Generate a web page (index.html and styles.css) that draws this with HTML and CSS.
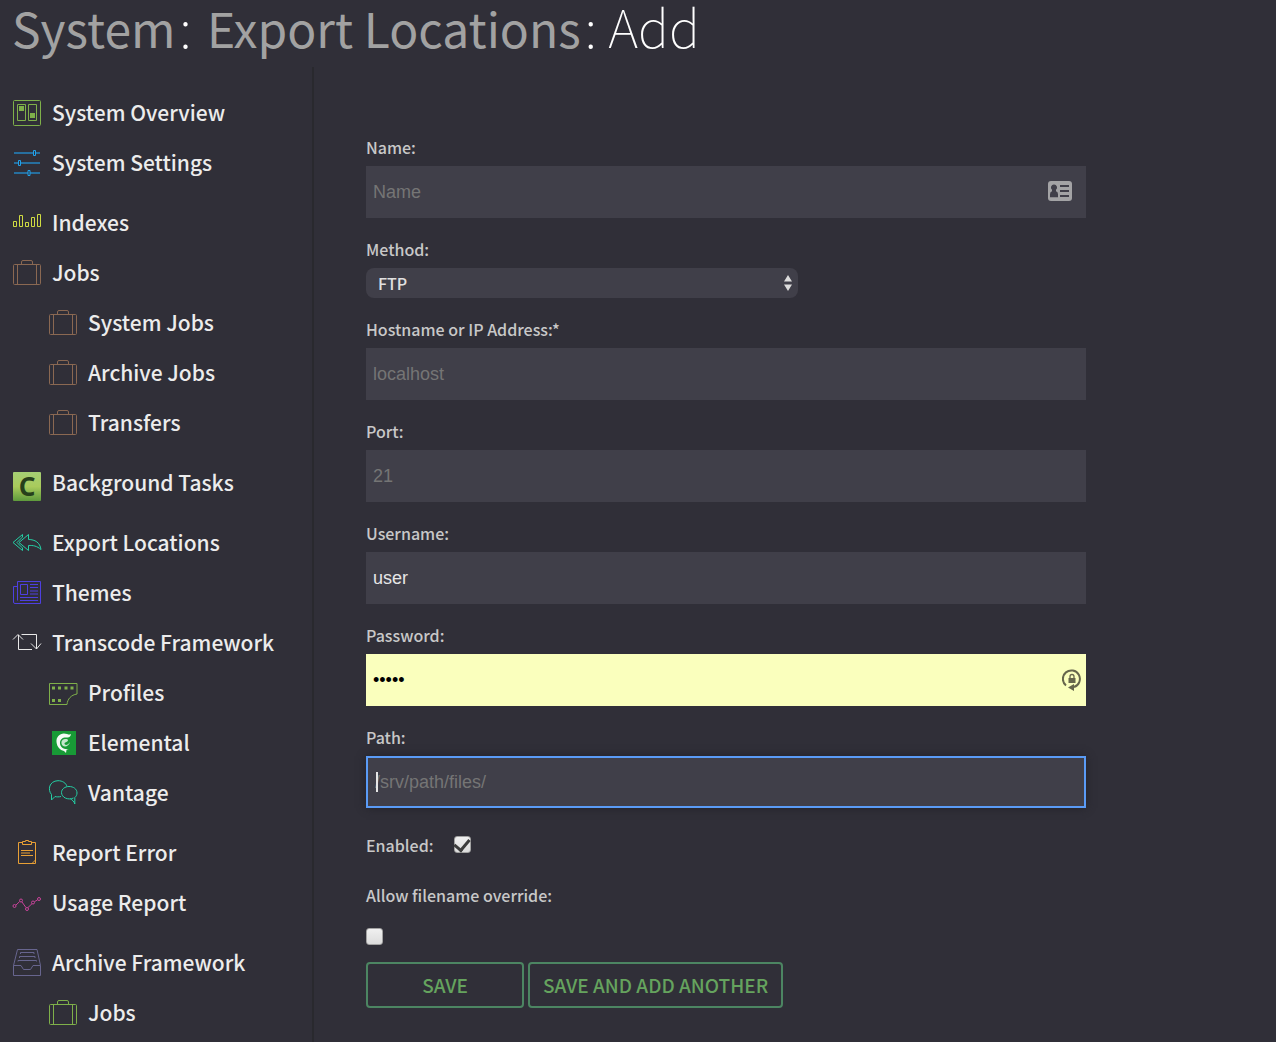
FILE: index.html
```html
<!DOCTYPE html>
<html lang="en">
<head>
<meta charset="utf-8">
<title>System: Export Locations: Add</title>
<link rel="stylesheet" href="styles.css">
</head>
<body>
<svg width="0" height="0" class="sprites" aria-hidden="true">
  <symbol id="case" viewBox="0 0 30 30">
    <rect x="1.5" y="6.5" width="27" height="20" rx="1"/>
    <path d="M5.500 6.500V26.500M24.500 6.500V26.500M9.500 6.500V4Q9.500 2.500 11 2.500H19Q20.500 2.500 20.500 4V6.500"/>
  </symbol>
</svg>

<header class="page-header">
  <h1 class="title"><a href="#system">System</a>: <a href="#export">Export Locations</a>: Add</h1>
</header>

<div class="layout">
  <nav class="sidebar" aria-label="System">
    <ul class="group">
      <li><a class="item" href="#overview"><svg class="icon green" viewBox="0 0 30 30"><rect x="1.500" y="2.500" width="27" height="25" rx="1"/><path d="M5.500 6.500h8v16h-8zM16.500 6.500h8v16h-8z"/><path class="solid" d="M7 8h5v5h-5zM18 15h5v5h-5z"/></svg>System Overview</a></li>
      <li><a class="item" href="#settings"><svg class="icon blue" viewBox="0 0 30 30"><path class="rail" d="M2 5H28M2 15H28M2 25H28"/><path class="knob" d="M21.500 2.500h2v5h-2zM6.500 12.500h2v5h-2zM16 22.500h2v5h-2z"/></svg>System Settings</a></li>
    </ul>
    <ul class="group">
      <li><a class="item" href="#indexes"><svg class="icon lime" viewBox="0 0 30 30"><path d="M1.500 13.500h3v5h-3zM7.500 7.500h3v11h-3zM13.500 14.500h3v4h-3zM19.500 9.500h3v9h-3zM25.500 6.500h3v12h-3z"/></svg>Indexes</a></li>
      <li><a class="item" href="#jobs"><svg class="icon brown"><use href="#case"/></svg>Jobs</a></li>
      <li><a class="item sub" href="#system-jobs"><svg class="icon brown"><use href="#case"/></svg>System Jobs</a></li>
      <li><a class="item sub" href="#archive-jobs"><svg class="icon brown"><use href="#case"/></svg>Archive Jobs</a></li>
      <li><a class="item sub" href="#transfers"><svg class="icon brown"><use href="#case"/></svg>Transfers</a></li>
    </ul>
    <ul class="group">
      <li><a class="item" href="#tasks"><svg class="icon" viewBox="0 0 30 30"><defs><linearGradient id="leaf" x1="0" y1="0" x2="0" y2="1"><stop offset="0" stop-color="#a5cf74"/><stop offset=".5" stop-color="#a9cb5c"/><stop offset="1" stop-color="#5e9a3c"/></linearGradient></defs><rect x="1" y="4" width="28" height="29" rx="1" fill="url(#leaf)" stroke="none"/><text class="logo-letter" x="15" y="28" text-anchor="middle">C</text></svg>Background Tasks</a></li>
    </ul>
    <ul class="group">
      <li><a class="item" href="#export"><svg class="icon teal" viewBox="0 0 30 30"><path d="M10.500 9V6.500L1 14.500L10.500 22.500V20L5 14.500zM16.500 6.500L7 14.500L16.500 22.500V17.500C21 17.200 25 18 29 21.500C28 14.500 23 11.500 16.500 11.500z"/></svg>Export Locations</a></li>
      <li><a class="item" href="#themes"><svg class="icon indigo" viewBox="0 0 30 30"><path d="M5.500 3.500H28.500V25.500H3Q1.500 25.500 1.500 24V8.500H5.500M5.500 3.500V22.500M8.500 6.500h7v10h-7zM18 6.500H26M18 9.500H26M18 13H26M18 16H26M8 19.500H26M8 22.500H26"/></svg>Themes</a></li>
      <li><a class="item" href="#transcode"><svg class="icon white" viewBox="0 0 30 30"><path d="M1 11.500L6 6.500L11 11.500M6.500 7V21.500H20M9.500 6.500H24.500V21M19 15.500L24.500 21L29 15.500"/></svg>Transcode Framework</a></li>
      <li><a class="item sub" href="#profiles"><svg class="icon green" viewBox="0 0 30 30"><path d="M1.500 5.500H29V16C23 17 19.500 21 19 26.500H1.500z"/><path class="solid" d="M4 8.500h3v3h-3zM10 8.500h3v3h-3zM16.500 8.500h3v3h-3zM22.500 8.500h3v3h-3zM4 21h3v3h-3zM10 21h3v3h-3z"/></svg>Profiles</a></li>
      <li><a class="item sub" href="#elemental"><svg class="icon" viewBox="0 0 30 30"><path fill="#189a36" d="M4 3h24v24H4z"/><path fill="#f4faf5" d="M19 6C13 4 8 8 8.500 14C9 19 12 22 16 23L18 25L18.500 22L21 21C16 22 12 19 12 15C12 11 15 9 19 9.500C21 10 23 8 23 6C21 7 21 6.500 19 6z"/><path fill="#c5e6cd" d="M17 11C13.500 11 12.500 15 14.500 17.500C17 20 21 18 22 14C20 17 17 18 16.500 15.500C16.500 14 19 14.500 20 12.500C20 11 18.500 10.800 17 11z"/></svg>Elemental</a></li>
      <li><a class="item sub" href="#vantage"><svg class="icon teal" viewBox="0 0 30 30"><path d="M13 18.500C11 19 8.500 19 7 18.500L3.500 22V16.500C-.5 12 1 3 10 2.700C14.500 2.700 18 5 19 8.500"/><path d="M25.500 20C20 22.500 13.500 19.500 13.500 14.500C13.500 11 17 8.500 21 8.500C25.500 8.500 29 11 29 15C29 17 28 18.500 26.800 19.500V26C26.500 24 24 21.500 22.500 21"/></svg>Vantage</a></li>
    </ul>
    <ul class="group">
      <li><a class="item" href="#error"><svg class="icon orange" viewBox="0 0 30 30"><path d="M10 4.500H6.500V25.500H23.500V4.500H20M20 25.500L23.500 22M11 3.500H13.500V2.500H16.500V3.500H19.500V6.500H10.500V3.500zM9 12.500H21M9 15H18M9 17.500H21"/></svg>Report Error</a></li>
      <li><a class="item" href="#usage"><svg class="icon pink" viewBox="0 0 30 30"><path d="M4 17L7.600 13.600M10 14L14 19.600M16 19.500L20 15.700M22.500 13.700L25.600 11.800"/><circle cx="2.500" cy="18" r="1.500"/><circle cx="9" cy="12.500" r="1.500"/><circle cx="15" cy="21" r="1.500"/><circle cx="21" cy="14.500" r="1.500"/><circle cx="27" cy="11" r="1.500"/></svg>Usage Report</a></li>
    </ul>
    <ul class="group">
      <li><a class="item" href="#archive"><svg class="icon slate" viewBox="0 0 30 30"><path d="M5.500 1.500H25L28.500 17.500V27.500H1.500V17.500zM1.500 17.500H9L11.500 21.500H18.500L21 17.500H28.500M8.500 6V4.500H22V6M7.500 10V8.500H23V10M6 13.500V12.500H24.500V13.500"/></svg>Archive Framework</a></li>
      <li><a class="item sub" href="#archive-framework-jobs"><svg class="icon green"><use href="#case"/></svg>Jobs</a></li>
    </ul>
  </nav>

  <main class="content">
    <form class="form">
      <div class="field">
        <label for="name">Name:</label>
        <div class="control">
          <input class="text" id="name" type="text" placeholder="Name">
          <svg class="badge card" viewBox="0 0 24 20"><rect width="24" height="20" rx="3" fill="#a3a3a5"/><path fill="#403f49" d="M6 3.500a3 3 0 0 1 2 5.300v1.500q2 .7 2 3v3H2v-3q0-2.300 2-3V8.800A3 3 0 0 1 6 3.500zM12 4h9v2h-9zM12 9h9v2h-9zM12 14h9v2h-9z"/></svg>
        </div>
      </div>
      <div class="field">
        <label for="method">Method:</label>
        <div class="control short">
          <select class="select" id="method"><option>FTP</option><option>SFTP</option></select>
          <svg class="arrows" viewBox="0 0 10 16"><path fill="#dcdcdc" d="M5 0L9 6.500H1zM5 16L9 9.500H1z"/></svg>
        </div>
      </div>
      <div class="field">
        <label for="host">Hostname or IP Address:*</label>
        <input class="text" id="host" type="text" placeholder="localhost">
      </div>
      <div class="field">
        <label for="port">Port:</label>
        <input class="text" id="port" type="text" placeholder="21">
      </div>
      <div class="field">
        <label for="user">Username:</label>
        <input class="text" id="user" type="text" value="user">
      </div>
      <div class="field">
        <label for="password">Password:</label>
        <div class="control">
          <input class="text autofilled" id="password" type="password" value="admin">
          <svg class="badge lock" viewBox="0 0 20 22"><path fill="none" stroke="#66664c" stroke-width="2" d="M4 16.500A8.500 8.500 0 1 1 12 18"/><path fill="#66664c" d="M6 18.500L12 15V22zM6.500 9h7v5h-7z"/><path fill="none" stroke="#66664c" stroke-width="1.300" d="M8 9.500V7.500a2 2 0 0 1 4 0v2"/></svg>
        </div>
      </div>
      <div class="field">
        <label for="path">Path:</label>
        <div class="control">
          <input class="text active" id="path" type="text" placeholder="/srv/path/files/">
          <span class="caret"></span>
        </div>
      </div>
      <div class="check-row">
        <label for="enabled">Enabled:</label>
        <input class="check" id="enabled" type="checkbox" checked>
      </div>
      <div class="check-stack">
        <label for="override">Allow filename override:</label>
        <input class="check" id="override" type="checkbox">
      </div>
      <div class="actions">
        <button class="button save" type="submit">SAVE</button>
        <button class="button" type="submit">SAVE AND ADD ANOTHER</button>
      </div>
    </form>
  </main>
</div>
</body>
</html>
```

FILE: styles.css
```css
* { box-sizing: border-box; }

body {
  margin: 0;
  min-height: 100vh;
  display: flex;
  flex-direction: column;
  background: #302f38;
  color: #c8c8c8;
  font-family: "Noto Sans CJK JP", "Noto Sans", sans-serif;
  font-weight: 500;
}

.sprites { position: absolute; }

.page-header { padding: 0 8px 12px; }

.title {
  margin: 0;
  color: #fff;
  font-size: 52px;
  line-height: 52px;
  font-weight: 100;
}
.title a {
  margin: 0 4px;
  color: #a2a2a2;
  font-size: 48px;
  font-weight: 400;
  text-decoration: none;
}

.layout {
  display: flex;
  flex: 1;
  margin-top: 2px;
}

/* Sidebar */
.sidebar {
  flex: 0 0 314px;
  padding: 22px 12px 0;
  border-right: 2px solid #29292e;
}
.group {
  margin: 0 0 10px;
  padding: 0;
  list-style: none;
}
.group:last-child { margin-bottom: 0; }
.item {
  display: flex;
  align-items: center;
  gap: 10px;
  height: 50px;
  padding-bottom: 4px;
  color: #ececec;
  font-size: 21px;
  line-height: 30px;
  text-decoration: none;
  white-space: nowrap;
}
.sub { padding-left: 36px; }

.icon {
  flex: none;
  width: 30px;
  height: 30px;
  margin-top: 2px;
  overflow: visible;
  fill: none;
  stroke: currentColor;
  stroke-width: 1;
}
.icon > path[fill] { stroke: none; }
.icon .solid { fill: currentColor; stroke: none; }
.icon .rail { stroke: #276f9e; stroke-width: 2; }
.icon .knob { fill: #302f38; }
.logo-letter {
  fill: #26401b;
  stroke: none;
  font: 700 26px "Noto Sans", sans-serif;
}
.green { color: #7fb04a; }
.blue { color: #21a2ea; }
.lime { color: #d0dc42; }
.brown { color: #8a6852; }
.teal { color: #24cfa4; }
.indigo { color: #4e40e0; }
.white { color: #e8e8e8; }
.orange { color: #e8a035; }
.pink { color: #c8439a; }
.slate { color: #67658e; }

/* Form */
.content {
  flex: 1;
  padding: 63px 52px 0;
}
.form { max-width: 720px; }
.form label {
  padding-bottom: 2px;
  font-size: 16px;
  line-height: 34px;
}
.field {
  display: flex;
  flex-direction: column;
  margin-bottom: 14px;
}
.control {
  position: relative;
  display: flex;
}
.short { width: 60%; }
.text {
  width: 100%;
  height: 52px;
  padding: 0 7px;
  border: 0;
  border-radius: 0;
  background: #403f49;
  color: #e6e6e6;
  font: 18px "Liberation Sans", Arial, sans-serif;
}
.text::placeholder { color: #757575; }
.autofilled { background: #faffbd; color: #000; }
.active {
  border: 2px solid #5a9bf6;
  box-shadow: 0 0 8px #222228;
}
.caret {
  position: absolute;
  left: 10px;
  top: 16px;
  width: 2px;
  height: 20px;
  background: #e6e6e6;
}
.badge {
  position: absolute;
  top: 15px;
}
.card { right: 14px; width: 24px; height: 20px; }
.lock { right: 4px; width: 20px; height: 22px; }

.select {
  appearance: none;
  width: 100%;
  height: 30px;
  padding: 0 12px;
  border: 0;
  border-radius: 8px;
  background: #403f49;
  color: #e0e0e0;
  font: inherit;
  font-size: 16px;
}
.arrows {
  position: absolute;
  right: 5px;
  top: 7px;
  width: 10px;
  height: 16px;
  pointer-events: none;
}

.check-row {
  display: flex;
  align-items: center;
  gap: 20px;
  margin-top: 20px;
}
.check-stack {
  display: flex;
  flex-direction: column;
  gap: 14px;
  margin-top: 14px;
}
.check {
  appearance: none;
  display: grid;
  place-items: center;
  width: 17px;
  height: 17px;
  margin: 0;
  border: 1px solid #a2a2a2;
  border-radius: 3px;
  background: linear-gradient(#f0f0f0, #dcdcdc);
}
.check-row .check { margin-bottom: 4px; }
.check:checked::before {
  content: "";
  width: 7px;
  height: 12px;
  border: solid #3c3c3c;
  border-width: 0 3px 3px 0;
  transform: translateY(-1px) rotate(40deg);
}

.actions {
  display: flex;
  flex-wrap: wrap;
  gap: 4px;
  margin-top: 17px;
}
.button {
  height: 46px;
  padding: 0 13px 2px;
  border: 2px solid #4c8562;
  border-radius: 4px;
  background: transparent;
  color: #65a35e;
  font: inherit;
  font-size: 19px;
}
.save { min-width: 158px; }
```
